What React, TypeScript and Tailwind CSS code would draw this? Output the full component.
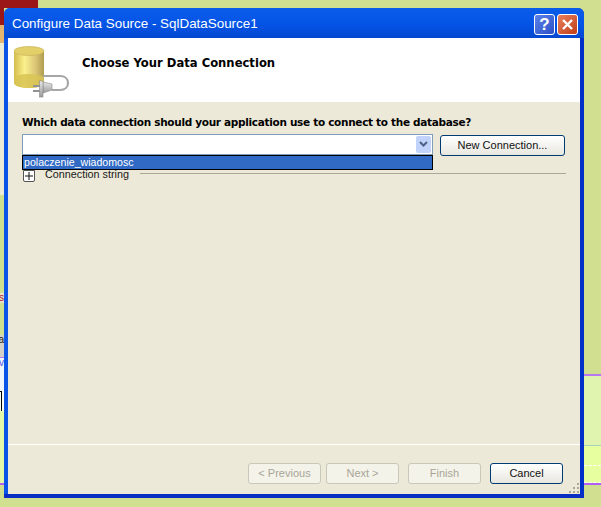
const leftStripes = [
  { h: "h-[25px]", bg: "bg-[#9b1616]", text: "", color: "" },
  { h: "h-[18px]", bg: "bg-[#e3b56f]", text: "", color: "" },
  { h: "h-[152px]", bg: "bg-[#ecebd6]", text: "", color: "" },
  { h: "h-[98px]", bg: "bg-[#cfe08f]", text: "", color: "" },
  { h: "h-[10px]", bg: "bg-[#e6e0cc]", text: "s", color: "text-[#b02020]" },
  { h: "h-[32px]", bg: "bg-[#cfe08f]", text: "", color: "" },
  { h: "h-[22px]", bg: "bg-[#d4d0c8]", text: "a", color: "text-[#222222]" },
  { h: "h-[1px]", bg: "bg-[#b878f0]", text: "", color: "" },
  { h: "h-[33px]", bg: "bg-[#f2f6ff]", text: "v", color: "text-[#5050e0]" },
  { h: "h-[20px]", bg: "bg-[#f8fff0]", text: "", color: "" },
  { h: "h-[72px]", bg: "bg-[#e4f8a8]", text: "", color: "" },
  { h: "h-[2px]", bg: "bg-[#b060f0]", text: "", color: "" },
];

function DbIcon() {
  return (
    <svg width="56" height="52" viewBox="0 0 56 52" className="shrink-0">
      <defs>
        <linearGradient id="can" x1="0" x2="1" y1="0" y2="0">
          <stop offset="0" stopColor="#d4bc4c" />
          <stop offset="0.35" stopColor="#fbf08c" />
          <stop offset="0.7" stopColor="#dcc878" />
          <stop offset="1" stopColor="#b09c50" />
        </linearGradient>
        <linearGradient id="plug" x1="0" x2="0" y1="0" y2="1">
          <stop offset="0" stopColor="#e8e8e8" />
          <stop offset="1" stopColor="#9a9a9a" />
        </linearGradient>
      </defs>
      <path d="M0 5v32c0 3 8 5 15 5s15-2 15-5V5z" fill="url(#can)" />
      <path d="M0 32c0-2 8-4 15-4s15 2 15 4v5c0 3-8 5-15 5S0 40 0 37z" fill="#d8c454" opacity="0.85" />
      <ellipse cx="15" cy="5" rx="15" ry="4.5" fill="#e3d069" stroke="#c9b55c" strokeWidth="0.7" />
      <path d="M29 30h17c5 0 8 3 8 7s-3 7-8 7h-8" fill="none" stroke="#a6a6a6" strokeWidth="2.2" />
      <path d="M29 36l9 2v6l-9 3z" fill="url(#plug)" stroke="#8a8a8a" strokeWidth="0.6" />
      <rect x="25.5" y="35" width="3.5" height="16" fill="url(#plug)" stroke="#888888" strokeWidth="0.6" />
      <path d="M19 40h7M19 45h7" stroke="#929292" strokeWidth="2" />
    </svg>
  );
}

function XpButton({ label, disabled, w }: { label: string; disabled?: boolean; w: string }) {
  if (disabled) {
    return (
      <div className={`${w} h-[21px] flex items-center justify-center rounded-[3px] border border-[#c9c7ba] bg-[#f4f3ea] text-[#a8a597] text-[11px]`}>
        {label}
      </div>
    );
  }
  return (
    <div className={`${w} h-[21px] flex items-center justify-center rounded-[3px] border border-[#003c74] bg-gradient-to-b from-white to-[#e8e7df] text-[11px] text-[#111111]`}>
      {label}
    </div>
  );
}

export default function App() {
  return (
    <div className="relative w-[601px] h-[507px] overflow-hidden bg-[#d0e090] font-['Liberation_Sans',sans-serif]">
      <div className="flex flex-col w-[4px] overflow-hidden">
        {leftStripes.map((s, i) => (
          <div key={i} className={`${s.h} ${s.bg} ${s.color} flex justify-end text-[10px] leading-[10px] overflow-hidden`}>
            {s.text}
          </div>
        ))}
      </div>
      <div className="absolute left-0 top-0 w-[38px] h-[8px] bg-[#9b1616]" />
      <div className="absolute left-0 top-[391px] w-[2px] h-[20px] border-t border-r border-black" />
      <div className="absolute right-0 top-[374px] w-[17px] h-[111px] flex flex-col">
        <div className="h-[2px] bg-[#b878f0]" />
        <div className="h-[69px] bg-[#e0f4b0]" />
        <div className="h-[1px] bg-[#a8d0c0]" />
        <div className="h-[20px] bg-[#e8ffa0] border-b border-dashed border-white" />
        <div className="flex-1 bg-[#e8ffa0] border-b border-dashed border-white" />
        <div className="h-[2px] bg-[#b060f0]" />
      </div>

      <div className="absolute left-[4px] top-[8px] w-[580px] h-[490px] flex flex-col rounded-t-[6px] bg-gradient-to-r from-[#0a55e8] to-[#0030c8] overflow-hidden border-b-[4px] border-[#0a2ec4]">
        <div className="h-[30px] shrink-0 flex items-center pt-[3px] pl-[8px] pr-[6px] bg-gradient-to-b from-[#0a5ce8] via-[#0555e8] to-[#0348d0]">
          <span className="text-white text-[13.4px] flex-1">Configure Data Source - SqlDataSource1</span>
          <div className="flex gap-[2px]">
            <div className="w-[21px] h-[21px] flex items-center justify-center rounded-[3px] border border-white bg-gradient-to-br from-[#5c82e8] to-[#2c50c8] text-white font-bold text-[17px]">?</div>
            <div className="w-[21px] h-[21px] flex items-center justify-center rounded-[3px] border border-white bg-gradient-to-br from-[#e8805c] to-[#c03c14]">
              <svg width="13" height="13" viewBox="0 0 13 13">
                <path d="M2 2l9 9M11 2l-9 9" stroke="#fff" strokeWidth="2.4" />
              </svg>
            </div>
          </div>
        </div>

        <div className="flex-1 mx-[4px] flex flex-col bg-[#ece9d8]">
          <div className="h-[64px] shrink-0 bg-white flex items-start pl-[6px] pt-[8px]">
            <DbIcon />
            <span className="ml-[12px] mt-[9px] font-bold text-[11.6px] text-black font-['DejaVu_Sans',sans-serif]">Choose Your Data Connection</span>
          </div>

          <div className="relative flex-1 flex flex-col pl-[14px] pr-[15px] pt-[14px]">
            <div className="font-bold text-[10.5px] text-black font-['DejaVu_Sans',sans-serif] leading-[13px] tracking-[-0.31px]">Which data connection should your application use to connect to the database?</div>
            <div className="flex mt-[5px] gap-[7px]">
              <div className="w-[411px] h-[21px] flex justify-end items-center pr-[1px] bg-white border border-[#7f9db9]">
                <div className="w-[15px] h-[17px] rounded-[2px] bg-[#c1d3fb] flex items-center justify-center">
                  <svg width="9" height="7" viewBox="0 0 9 7">
                    <path d="M1 1l3.5 3.5L8 1" fill="none" stroke="#4d6185" strokeWidth="2" />
                  </svg>
                </div>
              </div>
              <div className="mt-[1px]">
                <XpButton label="New Connection..." w="w-[125px]" />
              </div>
            </div>
            <div className="flex items-center mt-[14px] h-[12px] -mr-[1px]">
              <div className="ml-[1px] w-[12px] h-[12px] rounded-b-[2px] border border-[#555555] bg-white flex items-center justify-center">
                <svg width="8" height="8" viewBox="0 0 8 8">
                  <path d="M4 0v8M0 4h8" stroke="#111111" strokeWidth="1" />
                </svg>
              </div>
              <span className="ml-[10px] -mt-[4px] text-[10.8px] text-[#1a1a1a]">Connection string</span>
              <div className="flex-1 h-[1px] -mt-[5px] bg-[#aca899] ml-[11px]" />
            </div>
            {/* dropdown list over the form */}
            <div className="absolute left-[14px] top-[53px] w-[411px] h-[15px] bg-[#316ac5] border border-black text-white text-[10.6px] leading-[13px] pl-[1px]">polaczenie_wiadomosc</div>

            <div className="mt-auto -ml-[14px] -mr-[15px] border-t border-white pt-[18px] h-[50px] flex justify-end pr-[17px]">
              <div className="flex">
                <XpButton label="< Previous" disabled w="w-[73px]" />
                <div className="w-[5px]" />
                <XpButton label="Next >" disabled w="w-[73px]" />
                <div className="w-[9px]" />
                <XpButton label="Finish" disabled w="w-[73px]" />
                <div className="w-[9px]" />
                <XpButton label="Cancel" w="w-[73px]" />
              </div>
            </div>
            <svg width="12" height="12" viewBox="0 0 12 12" className="absolute right-0 bottom-0">
              <path d="M9 1h2v2H9zM5 5h2v2H5zM9 5h2v2H9zM1 9h2v2H1zM5 9h2v2H5zM9 9h2v2H9z" fill="#aca899" />
            </svg>
          </div>
        </div>
      </div>
    </div>
  );
}
